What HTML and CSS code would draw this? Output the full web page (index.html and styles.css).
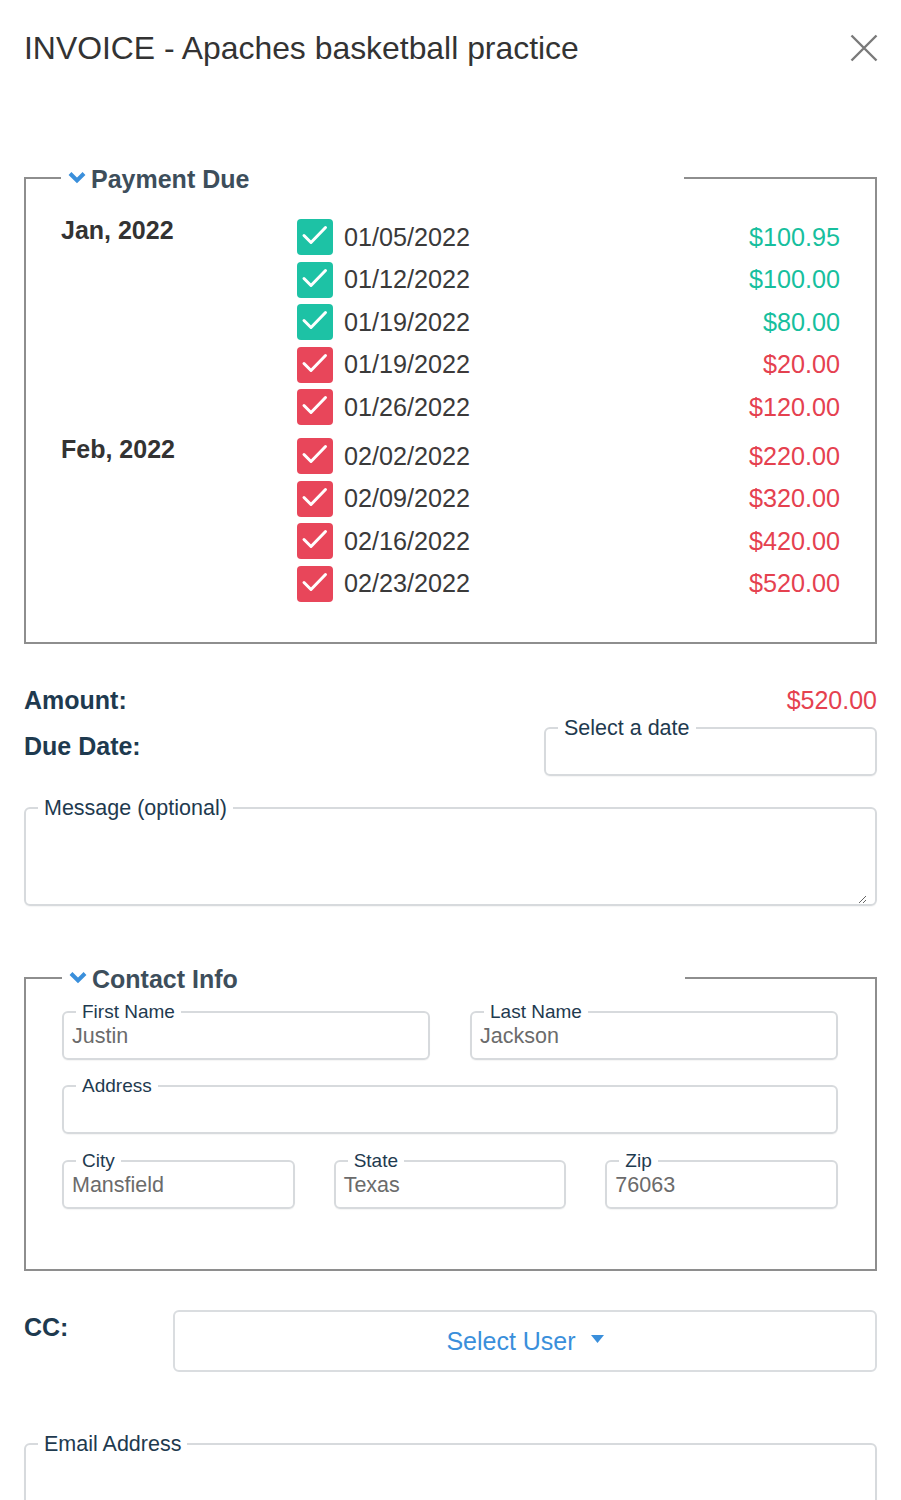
FILE: index.html
```html
<!DOCTYPE html>
<html lang="en">
<head>
<meta charset="utf-8">
<title>Invoice</title>
<link rel="stylesheet" href="styles.css">
</head>
<body>
<div class="page">
  <header class="header">
    <h1 class="title">INVOICE - Apaches basketball practice</h1>
    <svg class="close" width="28" height="28" viewBox="0 0 28 28"><path d="M1.5 1.5 L26.5 26.5 M26.5 1.5 L1.5 26.5" stroke="#7a7a7a" stroke-width="2.4" fill="none"/></svg>
  </header>

  <fieldset class="section payment">
    <legend class="section-legend">
      <svg class="chev" width="18" height="13" viewBox="0 0 18 13"><path d="M2 2.5 L9 9.5 L16 2.5" stroke="#3a8fdb" stroke-width="4" fill="none" stroke-linejoin="miter"/></svg>
      <span>Payment Due</span>
    </legend>
    <div class="month">
      <div class="month-name">Jan, 2022</div>
      <div class="rows">
        <div class="row paid"><span class="cb"><svg width="36" height="36" viewBox="0 0 36 36"><path d="M7 16.5 L14 23.5 L28.5 8.5" stroke="#fff" stroke-width="3" fill="none" stroke-linecap="round" stroke-linejoin="round"/></svg></span><span class="date">01/05/2022</span><span class="amt">$100.95</span></div>
        <div class="row paid"><span class="cb"><svg width="36" height="36" viewBox="0 0 36 36"><path d="M7 16.5 L14 23.5 L28.5 8.5" stroke="#fff" stroke-width="3" fill="none" stroke-linecap="round" stroke-linejoin="round"/></svg></span><span class="date">01/12/2022</span><span class="amt">$100.00</span></div>
        <div class="row paid"><span class="cb"><svg width="36" height="36" viewBox="0 0 36 36"><path d="M7 16.5 L14 23.5 L28.5 8.5" stroke="#fff" stroke-width="3" fill="none" stroke-linecap="round" stroke-linejoin="round"/></svg></span><span class="date">01/19/2022</span><span class="amt">$80.00</span></div>
        <div class="row due"><span class="cb"><svg width="36" height="36" viewBox="0 0 36 36"><path d="M7 16.5 L14 23.5 L28.5 8.5" stroke="#fff" stroke-width="3" fill="none" stroke-linecap="round" stroke-linejoin="round"/></svg></span><span class="date">01/19/2022</span><span class="amt">$20.00</span></div>
        <div class="row due"><span class="cb"><svg width="36" height="36" viewBox="0 0 36 36"><path d="M7 16.5 L14 23.5 L28.5 8.5" stroke="#fff" stroke-width="3" fill="none" stroke-linecap="round" stroke-linejoin="round"/></svg></span><span class="date">01/26/2022</span><span class="amt">$120.00</span></div>
      </div>
    </div>
    <div class="month month-next">
      <div class="month-name">Feb, 2022</div>
      <div class="rows">
        <div class="row due"><span class="cb"><svg width="36" height="36" viewBox="0 0 36 36"><path d="M7 16.5 L14 23.5 L28.5 8.5" stroke="#fff" stroke-width="3" fill="none" stroke-linecap="round" stroke-linejoin="round"/></svg></span><span class="date">02/02/2022</span><span class="amt">$220.00</span></div>
        <div class="row due"><span class="cb"><svg width="36" height="36" viewBox="0 0 36 36"><path d="M7 16.5 L14 23.5 L28.5 8.5" stroke="#fff" stroke-width="3" fill="none" stroke-linecap="round" stroke-linejoin="round"/></svg></span><span class="date">02/09/2022</span><span class="amt">$320.00</span></div>
        <div class="row due"><span class="cb"><svg width="36" height="36" viewBox="0 0 36 36"><path d="M7 16.5 L14 23.5 L28.5 8.5" stroke="#fff" stroke-width="3" fill="none" stroke-linecap="round" stroke-linejoin="round"/></svg></span><span class="date">02/16/2022</span><span class="amt">$420.00</span></div>
        <div class="row due"><span class="cb"><svg width="36" height="36" viewBox="0 0 36 36"><path d="M7 16.5 L14 23.5 L28.5 8.5" stroke="#fff" stroke-width="3" fill="none" stroke-linecap="round" stroke-linejoin="round"/></svg></span><span class="date">02/23/2022</span><span class="amt">$520.00</span></div>
      </div>
    </div>
  </fieldset>

  <div class="amount-row">
    <span class="strong-label">Amount:</span>
    <span class="total">$520.00</span>
  </div>
  <div class="due-row">
    <span class="strong-label due-label">Due Date:</span>
    <fieldset class="field field-lg date-field">
      <legend>Select a date</legend>
      <div class="value value-date"></div>
    </fieldset>
  </div>

  <fieldset class="field field-lg message">
    <legend>Message (optional)</legend>
    <textarea class="textarea"></textarea>
  </fieldset>

  <fieldset class="section contact">
    <legend class="section-legend">
      <svg class="chev" width="18" height="13" viewBox="0 0 18 13"><path d="M2 2.5 L9 9.5 L16 2.5" stroke="#3a8fdb" stroke-width="4" fill="none" stroke-linejoin="miter"/></svg>
      <span>Contact Info</span>
    </legend>
    <div class="grid two">
      <fieldset class="field"><legend>First Name</legend><div class="value">Justin</div></fieldset>
      <fieldset class="field"><legend>Last Name</legend><div class="value">Jackson</div></fieldset>
    </div>
    <div class="grid one">
      <fieldset class="field"><legend>Address</legend><div class="value"></div></fieldset>
    </div>
    <div class="grid three">
      <fieldset class="field"><legend>City</legend><div class="value">Mansfield</div></fieldset>
      <fieldset class="field"><legend>State</legend><div class="value">Texas</div></fieldset>
      <fieldset class="field"><legend>Zip</legend><div class="value">76063</div></fieldset>
    </div>
  </fieldset>

  <div class="cc-row">
    <span class="strong-label cc-label">CC:</span>
    <div class="select">
      <span>Select User</span>
      <svg class="caret" width="13" height="8" viewBox="0 0 13 8"><path d="M0 0 H13 L6.5 8 Z" fill="#3a8fdb"/></svg>
    </div>
  </div>

  <fieldset class="field field-lg email">
    <legend>Email Address</legend>
    <div class="value value-email"></div>
  </fieldset>
</div>
</body>
</html>
```
FILE: styles.css
```css
* { box-sizing: border-box; }
html, body { margin: 0; background: #fff; }
body {
  font-family: "Liberation Sans", Arial, Helvetica, sans-serif;
  color: #333;
}
.page {
  width: 901px;
  padding: 0 24px;
}
.header {
  display: flex;
  justify-content: space-between;
  align-items: center;
  padding-top: 30px;
  height: 66px;
}
.title {
  margin: 0;
  font-size: 31.9px;
  font-weight: normal;
  line-height: 36px;
  color: #333;
}
.close { margin-right: -1px; }

.section {
  margin: 0;
  min-width: 0;
  border: 2px solid #8e8e8e;
}
.section-legend {
  width: 623px;
  padding: 2px 0 0 7px;
  margin: 0;
  display: flex;
  align-items: center;
  gap: 5px;
  font-size: 25px;
  font-weight: bold;
  line-height: 28px;
  color: #3d4e5b;
}
.chev { margin-top: -4px; }

.payment {
  margin-top: 97px;
  padding: 23px 35px 37px 35px;
}
.month {
  display: flex;
}
.month-next { margin-top: 6.5px; }
.month-name {
  width: 236px;
  flex: none;
  font-size: 25px;
  font-weight: bold;
  line-height: 28px;
  color: #333;
}
.rows { flex: 1; }
.row {
  height: 42.5px;
  display: flex;
  align-items: center;
  font-size: 25.2px;
}
.cb {
  width: 36px;
  height: 36px;
  border-radius: 4px;
  display: block;
  flex: none;
}
.cb svg { display: block; }
.paid .cb { background: #1dc2a5; }
.due .cb { background: #e8465a; }
.date {
  margin-left: 11px;
  color: #3a3a3a;
  flex: 1;
}
.amt { text-align: right; }
.paid .amt { color: #17bf9e; }
.due .amt { color: #e5414f; }

.strong-label {
  font-size: 25px;
  font-weight: bold;
  line-height: 30px;
  color: #1e3a4f;
}
.amount-row {
  margin-top: 41px;
  display: flex;
  justify-content: space-between;
  align-items: center;
  height: 30px;
}
.total {
  font-size: 25px;
  line-height: 30px;
  color: #e5414f;
}
.due-row {
  display: flex;
  justify-content: space-between;
  margin-top: 1px;
}
.due-label { margin-top: 15px; }

/* outlined fields */
.field {
  margin: 0;
  min-width: 0;
  border: 2px solid #d7dadd;
  border-radius: 6px;
  padding: 0 8px;
  box-shadow: 0 1px 1px rgba(0,0,0,0.04);
}
.field legend {
  padding: 0 6px;
  margin-left: 4px;
  font-size: 19px;
  line-height: 22px;
  color: #1e3a4f;
}
.field-lg legend {
  font-size: 21.5px;
  line-height: 24px;
}
.value {
  height: 26px;
  margin-bottom: 9px;
  font-size: 21.5px;
  line-height: 26px;
  color: #6b6b6b;
}
.date-field { width: 333px; }
.value-date { height: 34px; margin-bottom: 0; }
.message { margin-top: 20px; }
.textarea {
  display: block;
  width: 100%;
  height: 84px;
  border: none;
  outline: none;
  resize: vertical;
  margin: 0;
  padding: 0;
  font-family: inherit;
  background: transparent;
}

.contact {
  margin-top: 57px;
  padding: 8px 37px 60px 36px;
}
.grid { display: grid; }
.grid.two { grid-template-columns: 1fr 1fr; column-gap: 40px; }
.grid.three { grid-template-columns: 1fr 1fr 1fr; column-gap: 39px; }
.grid.one { margin-top: 15px; }
.grid.three { margin-top: 16px; }

.cc-row {
  margin-top: 39px;
  display: flex;
  align-items: flex-start;
}
.cc-label {
  width: 149px;
  flex: none;
  margin-top: 2px;
}
.select {
  flex: 1;
  height: 62px;
  border: 2px solid #dadde0;
  border-radius: 6px;
  display: flex;
  align-items: center;
  justify-content: center;
  gap: 15px;
  font-size: 25px;
  color: #3a8fdb;
}
.caret { margin-top: -4px; }

.email { margin-top: 60px; }
.value-email { height: 80px; }
```
